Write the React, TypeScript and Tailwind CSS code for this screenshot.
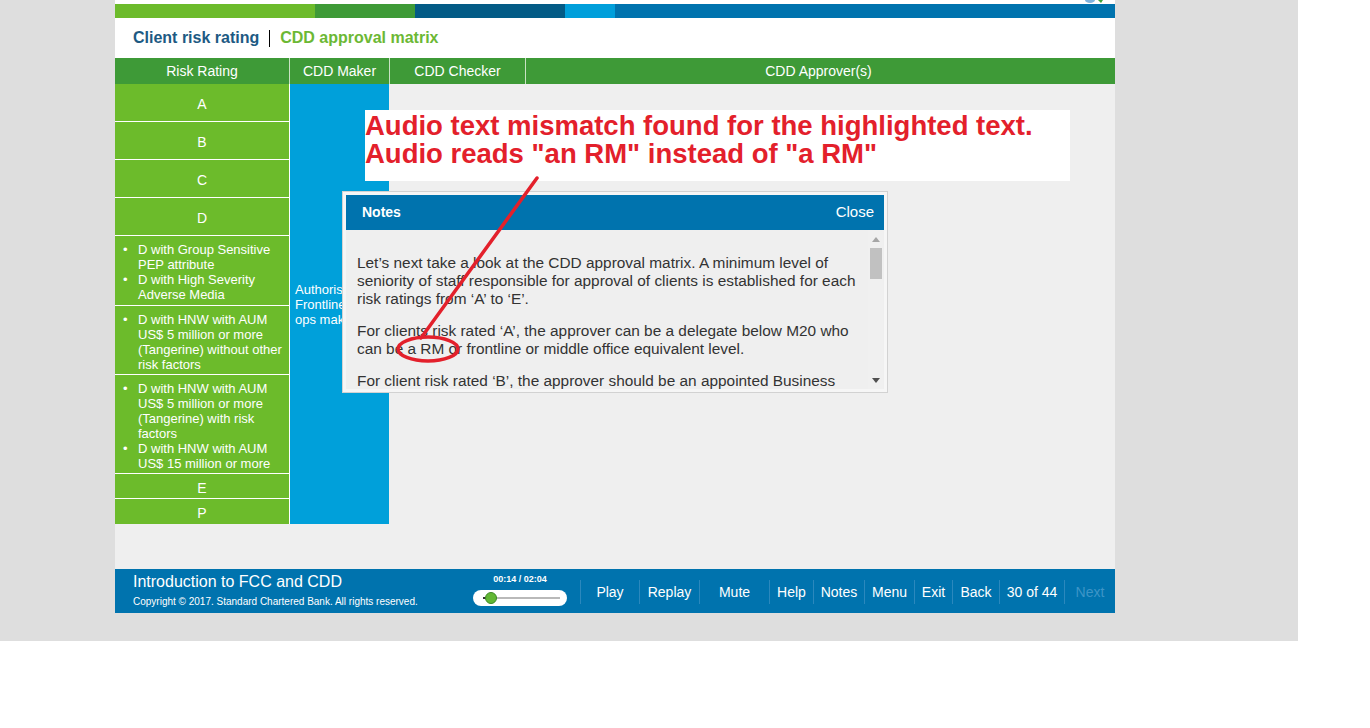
const leftRows = ['A', 'B', 'C', 'D'];

const bulletGroups = [
  { h: 'h-[70px]', items: ['D with Group Sensitive PEP attribute', 'D with High Severity Adverse Media'] },
  { h: 'h-[69px]', items: ['D with HNW with AUM US$ 5 million or more (Tangerine) without other risk factors'] },
  {
    h: 'h-[99px]',
    items: [
      'D with HNW with AUM US$ 5 million or more (Tangerine) with risk factors',
      'D with HNW with AUM US$ 15 million or more',
    ],
  },
];

const footerButtons = [
  { label: 'Play', w: 'w-[59px]' },
  { label: 'Replay', w: 'w-[60px]' },
  { label: 'Mute', w: 'w-[70px]' },
  { label: 'Help', w: 'w-[44px]' },
  { label: 'Notes', w: 'w-[51px]' },
  { label: 'Menu', w: 'w-[50px]' },
  { label: 'Exit', w: 'w-[38px]' },
  { label: 'Back', w: 'w-[47px]' },
  { label: '30 of 44', w: 'w-[65px]' },
  { label: 'Next', w: 'w-[51px]', dim: true },
];

function NotesPopup() {
  return (
    <div className="absolute left-[342px] top-[191px] w-[546px] h-[202px] border border-[#d2d2d2] bg-[#f6f6f6] p-[3px] flex flex-col">
      <div className="h-[35px] bg-[#0073ae] flex items-center justify-between pl-[16px] pr-[10px] text-white">
        <span className="text-[14px] font-bold">Notes</span>
        <span className="text-[15px]">Close</span>
      </div>
      <div className="relative flex-1 bg-[#efefef] overflow-hidden">
        <div className="w-[518px] pl-[11px] pt-[24px] text-[15.4px] leading-[18px] text-[#333333]">
          <p>
            Let’s next take a look at the CDD approval matrix. A minimum level of seniority of staff responsible for
            approval of clients is established for each risk ratings from ‘A’ to ‘E’.
          </p>
          <p className="mt-[14px]">
            For clients risk rated ‘A’, the approver can be a delegate below M20 who can be a RM or frontline or middle
            office equivalent level.
          </p>
          <p className="mt-[14px]">
            For client risk rated ‘B’, the approver should be an appointed Business Head or a delegate at M20 level.
          </p>
        </div>
        {/* scrollbar */}
        <div className="absolute right-[1px] top-0 bottom-0 w-[15px] bg-[#f0f0f0] flex flex-col items-center">
          <svg width="8" height="5" viewBox="0 0 8 5" className="mt-[7px]">
            <path d="M0 5 L4 0 L8 5 Z" fill="#a6a6a6" />
          </svg>
          <div className="mt-[6px] w-[12px] h-[31px] bg-[#c1c1c1]" />
          <div className="flex-1" />
          <svg width="8" height="5" viewBox="0 0 8 5" className="mb-[6px]">
            <path d="M0 0 L8 0 L4 5 Z" fill="#505050" />
          </svg>
        </div>
      </div>
    </div>
  );
}

export default function App() {
  return (
    <div className="relative w-[1370px] h-[728px] bg-white overflow-hidden font-['Liberation_Sans',Arial,sans-serif]">
      <div className="w-[1298px] h-[641px] bg-[#dedede] pl-[115px]">
        <div className="w-[1000px] flex flex-col">
          {/* top strip with cut-off icon */}
          <div className="relative h-[4px] bg-white">
            <svg className="absolute left-[968px] top-0" width="24" height="4" viewBox="0 0 24 4">
              <ellipse cx="7" cy="0" rx="5" ry="3" fill="#7fb3dd" />
              <path d="M15 0 L20 0 L18 3 Z" fill="#3fa23a" />
            </svg>
          </div>
          <div className="flex h-[14px]">
            <div className="w-[200px] bg-[#6cbb2b]" />
            <div className="w-[100px] bg-[#3e9a37]" />
            <div className="w-[150px] bg-[#035b86]" />
            <div className="w-[50px] bg-[#009fdb]" />
            <div className="flex-1 bg-[#0073ae]" />
          </div>

          {/* title */}
          <div className="h-[40px] bg-white flex items-center pl-[18px] text-[16px] font-bold">
            <span className="text-[#1d5a83]">Client risk rating</span>
            <span className="mx-[10px] w-px h-[17px] bg-black" />
            <span className="text-[#6cb834]">CDD approval matrix</span>
          </div>

          {/* table header */}
          <div className="flex h-[26px] bg-[#3e9a37] text-white text-[14px]">
            <div className="w-[174px] flex items-center justify-center">Risk Rating</div>
            <div className="w-[100px] border-l border-[#c9e2c3] flex items-center justify-center">CDD Maker</div>
            <div className="w-[136px] border-l border-[#c9e2c3] flex items-center justify-center">CDD Checker</div>
            <div className="flex-1 border-l border-[#c9e2c3] flex items-center justify-center pr-[4px]">CDD Approver(s)</div>
          </div>

          {/* table body */}
          <div className="flex h-[485px] bg-[#efefef] items-start">
            <div className="w-[174px] flex flex-col bg-[#6cbb2b] text-white">
              {leftRows.map((r) => (
                <div key={r} className="h-[38px] pt-[4px] border-b border-white flex items-center justify-center text-[14px]">
                  {r}
                </div>
              ))}
              {bulletGroups.map((g, i) => (
                <div key={i} className={`${g.h} border-b border-white pt-[6px] pl-[8px] pr-[4px] text-[13px] leading-[15px]`}>
                  {g.items.map((t) => (
                    <div key={t} className="flex">
                      <span className="w-[15px] shrink-0">•</span>
                      <span>{t}</span>
                    </div>
                  ))}
                </div>
              ))}
              <div className="h-[25px] pt-[4px] border-b border-white flex items-center justify-center text-[14px]">E</div>
              <div className="h-[25px] pt-[4px] flex items-center justify-center text-[14px]">P</div>
            </div>
            <div className="w-[100px] h-[440px] border-l border-white bg-[#00a0da] flex items-center pl-[5px] text-white text-[13px] leading-[15px]">
              <div>
                Authorised
                <br />
                Frontline
                <br />
                ops maker
              </div>
            </div>
          </div>

          {/* footer */}
          <div className="flex h-[44px] bg-[#0073ae] text-white">
            <div className="w-[358px] pl-[18px] pt-[4px] flex flex-col">
              <span className="text-[16px] leading-[18px]">Introduction to FCC and CDD</span>
              <span className="mt-[5px] text-[10px] leading-[12px]">
                Copyright © 2017. Standard Chartered Bank. All rights reserved.
              </span>
            </div>
            <div className="w-[94px] pt-[5px] flex flex-col items-center">
              <span className="text-[9px] leading-[11px] font-bold">00:14 / 02:04</span>
              <div className="mt-[5px] w-[94px] h-[16px] rounded-full bg-white relative">
                <div className="absolute left-[10px] top-[7px] w-[77px] h-[2px] bg-[#b9b9b9]" />
                <div className="absolute left-[10px] top-[7px] w-[6px] h-[2px] bg-[#333333]" />
                <div className="absolute left-[12px] top-[2px] w-[12px] h-[12px] rounded-full bg-[#63b734] border border-[#3d8a25]" />
              </div>
            </div>
            <div className="w-[13px]" />
            <div className="flex items-center">
              {footerButtons.map((b) => (
                <div
                  key={b.label}
                  className={`${b.w} h-[24px] mt-[2px] border-l border-[#2b88bd] flex items-center justify-center text-[14px] ${
                    b.dim ? 'text-[#3d95c7]' : 'text-white'
                  }`}
                >
                  {b.label}
                </div>
              ))}
            </div>
          </div>
        </div>
      </div>

      {/* review annotation */}
      <div className="absolute left-[365px] top-[110px] w-[705px] h-[71px] bg-white pt-[2px] text-[27.5px] leading-[28px] font-bold text-[#e3202b]">
        Audio text mismatch found for the highlighted text.
        <br />
        Audio reads "an RM" instead of "a RM"
      </div>

      <NotesPopup />

      <svg className="absolute inset-0 pointer-events-none" width="1370" height="728" viewBox="0 0 1370 728">
        <line x1="537" y1="178" x2="421" y2="338" stroke="#e3202b" strokeWidth="3.5" strokeLinecap="round" />
        <ellipse cx="428" cy="349" rx="30" ry="12" fill="none" stroke="#e3202b" strokeWidth="3.5" />
      </svg>
    </div>
  );
}
